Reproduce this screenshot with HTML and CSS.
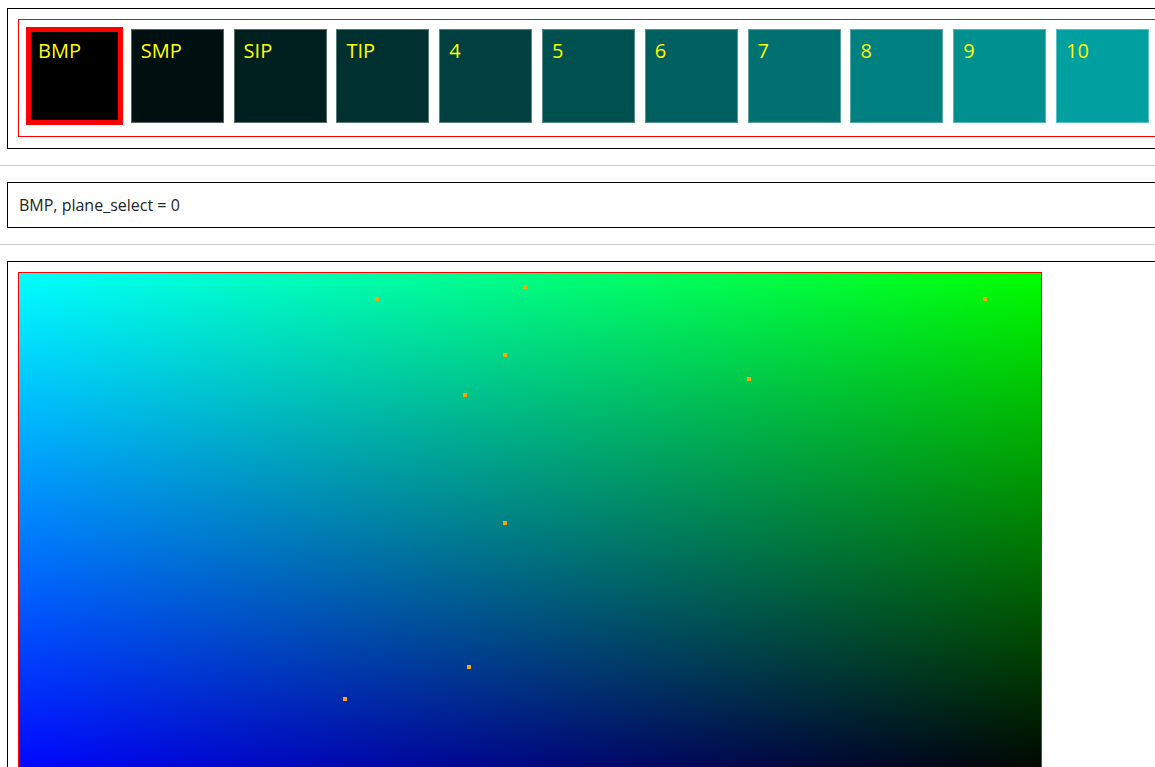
FILE: index.html
```html
<!DOCTYPE html>
<html>
<head>
<meta charset="utf-8">
<link rel="stylesheet" href="styles.css">
</head>
<body>
<div class="page">
  <div class="panel">
    <div class="planes">
      <div class="tile selected" style="background:rgb(0,0,0)">BMP</div>
      <div class="tile" style="background:rgb(0,16,16)">SMP</div>
      <div class="tile" style="background:rgb(0,32,32)">SIP</div>
      <div class="tile" style="background:rgb(0,48,48)">TIP</div>
      <div class="tile" style="background:rgb(0,64,64)">4</div>
      <div class="tile" style="background:rgb(0,80,80)">5</div>
      <div class="tile" style="background:rgb(0,96,96)">6</div>
      <div class="tile" style="background:rgb(0,112,112)">7</div>
      <div class="tile" style="background:rgb(0,128,128)">8</div>
      <div class="tile" style="background:rgb(0,144,144)">9</div>
      <div class="tile" style="background:rgb(0,160,160)">10</div>
    </div>
  </div>
  <hr class="rule">
  <div class="panel status">BMP, plane_select = 0</div>
  <hr class="rule">
  <div class="panel">
    <div class="canvas">
      <span class="dot" style="left:356px;top:24px"></span>
      <span class="dot" style="left:504px;top:12px"></span>
      <span class="dot" style="left:964px;top:24px"></span>
      <span class="dot" style="left:484px;top:80px"></span>
      <span class="dot" style="left:728px;top:104px"></span>
      <span class="dot" style="left:444px;top:120px"></span>
      <span class="dot" style="left:484px;top:248px"></span>
      <span class="dot" style="left:448px;top:392px"></span>
      <span class="dot" style="left:324px;top:424px"></span>
    </div>
  </div>
</div>
</body>
</html>
```

FILE: styles.css
```css
html, body {
  margin: 0;
  padding: 0;
  background: #fff;
  overflow: hidden;
}

body {
  font-family: "Open Sans", "Noto Sans", sans-serif;
  color: #212529;
}

.page {
  width: max-content;
  padding-top: 8px;
}

.panel {
  margin-left: 7px;
  border: 1px solid #000;
  padding: 10px 10px 11px 10px;
}

.planes {
  display: flex;
  gap: 9.8px;
  border: 1px solid #ff0000;
  padding: 9px 9px 13px 9px;
}

.tile {
  box-sizing: border-box;
  width: 93px;
  height: 94px;
  flex: none;
  border: 1px solid rgba(255, 255, 255, 0.35);
  padding: 9px 9px 0 9px;
  color: #ffff00;
  font-size: 20px;
  line-height: 24px;
}

.tile.selected {
  border: 3px solid #ff0000;
  box-shadow: 0 0 0 2px #ff0000;
  padding: 7px 7px 0 7px;
}

.rule {
  margin: 16px 0;
  border: 0;
  border-top: 1px solid #cccccc;
  height: 0;
}

.status {
  padding: 10px 11px;
  font-size: 16px;
  line-height: 24px;
}

.canvas {
  position: relative;
  box-sizing: border-box;
  width: 1024px;
  height: 512px;
  border: 1px solid #ff0000;
  background:
    linear-gradient(to right, rgb(0, 0, 255), rgb(0, 0, 0)),
    linear-gradient(to bottom, rgb(0, 255, 0), rgb(0, 0, 0));
  background-blend-mode: lighten;
}

.dot {
  position: absolute;
  width: 4px;
  height: 4px;
  background: #ffa500;
}
```
